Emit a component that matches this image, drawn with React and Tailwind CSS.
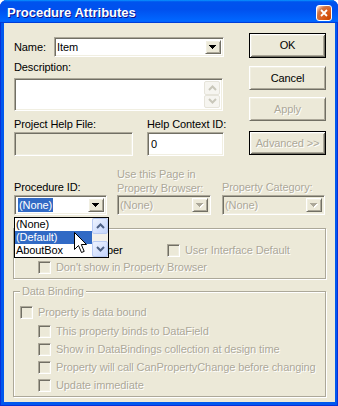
import React from 'react';

const sunken =
    'border border-t-[#aca899] border-l-[#aca899] border-b-white border-r-white shadow-[inset_1px_1px_0_#716f64,inset_-1px_-1px_0_#f1efe2]';
const raised =
    'border border-t-white border-l-white border-b-[#716f64] border-r-[#716f64] shadow-[inset_1px_1px_0_#f1efe2,inset_-1px_-1px_0_#aca899]';
const framed =
    'border border-black shadow-[inset_1px_1px_0_#fff,inset_-1px_-1px_0_#716f64,inset_2px_2px_0_#f1efe2,inset_-2px_-2px_0_#aca899]';
const grayText = 'text-[#aca899] [text-shadow:1px_1px_0_#fff]';

const Triangle = ({ disabled }) => (
    <svg width="8" height="5" viewBox="0 0 8 5" shapeRendering="crispEdges">
        {disabled && (
            <g fill="#fff">
                <rect x="1" y="1" width="7" height="1" />
                <rect x="2" y="2" width="5" height="1" />
                <rect x="3" y="3" width="3" height="1" />
                <rect x="4" y="4" width="1" height="1" />
            </g>
        )}
        <g fill={disabled ? '#aca899' : '#000'}>
            <rect x="0" y="0" width="7" height="1" />
            <rect x="1" y="1" width="5" height="1" />
            <rect x="2" y="2" width="3" height="1" />
            <rect x="3" y="3" width="1" height="1" />
        </g>
    </svg>
);

const Combo = ({ width, value, disabled, selected }) => (
    <div
        className={`${width} h-[20px] flex items-stretch p-[2px] ${sunken} ${disabled ? 'bg-[#ece9d8]' : 'bg-white'}`}
    >
        <div className={`flex-1 flex items-center ${selected ? 'pl-[1px]' : 'pl-[0px]'}`}>
            {selected ? (
                <span className="h-[14px] leading-[14px] px-[1px] bg-[#316ac5] text-white">{value}</span>
            ) : (
                <span className={disabled ? grayText : ''}>{value}</span>
            )}
        </div>
        <div className={`w-[16px] flex items-center justify-center bg-[#ece9d8] ${raised}`}>
            <Triangle disabled={disabled} />
        </div>
    </div>
);

const Button = ({ children, disabled, dark, className = '' }) => (
    <div
        className={`w-[77px] h-[24px] flex items-center justify-center bg-[#ece9d8] ${dark ? framed : raised} ${disabled ? grayText : ''} ${className}`}
    >
        {children}
    </div>
);

const Check = ({ enabled }) => (
    <div className={`w-[13px] h-[13px] shrink-0 ${sunken} ${enabled ? 'bg-white' : 'bg-[#ece9d8]'}`} />
);

const CheckRow = ({ label, enabled, className = '' }) => (
    <div className={`flex items-center h-[13px] ${className}`}>
        <Check enabled={enabled} />
        <span className={`ml-[5px] whitespace-nowrap ${enabled ? '' : grayText}`}>{label}</span>
    </div>
);

const Chevron = ({ up, color, width = 2 }) => (
    <svg width="9" height="6" viewBox="0 0 9 6">
        <path
            d={up ? 'M1 5 L4.5 1.5 L8 5' : 'M1 1 L4.5 4.5 L8 1'}
            fill="none"
            stroke={color}
            strokeWidth={width}
        />
    </svg>
);

const DropList = () => (
    <div className="absolute left-0 top-[22px] z-10 w-[95px] h-[41px] border border-black bg-white flex">
        <div className="flex-1 flex flex-col">
            <div className="h-[13px] pl-[1px]">(None)</div>
            <div className="h-[13px] pl-[1px] bg-[#316ac5] text-white">(Default)</div>
            <div className="h-[13px] pl-[1px]">AboutBox</div>
        </div>
        <div className="w-[16px] flex flex-col bg-[#f3f1ea]">
            <div className="h-[16px] flex items-center justify-center rounded-[2px] border border-[#b9cbf3] bg-[linear-gradient(135deg,#eef3fe,#c4d5fc)]">
                <Chevron up color="#4d6185" />
            </div>
            <div className="flex-1" />
            <div className="h-[16px] flex items-center justify-center rounded-[2px] border border-[#b9cbf3] bg-[linear-gradient(135deg,#eef3fe,#c4d5fc)]">
                <Chevron color="#4d6185" />
            </div>
        </div>
    </div>
);

const Cursor = () => (
    <svg className="absolute left-[70px] top-[209px] z-20" width="14" height="22" viewBox="0 0 14 22">
        <path
            d="M0.5 0.5 V17.5 L4.5 13.5 L7.5 20.5 L10.2 19.4 L7.3 12.5 H12.5 Z"
            fill="#fff"
            stroke="#000"
            strokeLinejoin="miter"
        />
    </svg>
);

const App = () => {
    return (
        <div className="w-[338px] h-[406px] bg-white font-['Liberation_Sans',Arial,sans-serif] text-[11px] leading-[13px] tracking-[-0.1px] text-black">
            <div className="w-[338px] h-[406px] flex flex-col rounded-t-[7px] overflow-hidden bg-[#0058ee] shadow-[inset_1px_0_0_#0831d9,inset_-1px_0_0_#0831d9,inset_0_-1px_0_#0831d9]">
                {/* Title bar */}
                <div className="h-[23px] shrink-0 flex items-center pl-[7px] pr-[6px] bg-[linear-gradient(180deg,#0997ff,#0053ee_8%,#0050ee_40%,#0066ff_88%,#0066ff_93%,#005bff_95%,#003dd7_96%,#003dd7)]">
                    <span className="pt-[1px] text-[13px] leading-[13px] tracking-normal font-bold text-white [text-shadow:1px_1px_0_#0f1089]">
                        Procedure Attributes
                    </span>
                    <div className="ml-auto w-[16px] h-[16px] mt-[2px] flex items-center justify-center rounded-[3px] border border-white bg-[radial-gradient(circle_at_90%_90%,#cc4600_0%,#dc6527_55%,#cd7546_70%,#ffccb2_90%,#fff_100%)]">
                        <svg width="8" height="8" viewBox="0 0 8 8">
                            <path d="M1 1 L7 7 M7 1 L1 7" stroke="#fff" strokeWidth="1.8" />
                        </svg>
                    </div>
                </div>

                {/* Body */}
                <div className="flex-1 flex pl-[4px] pr-[3px] pb-[4px]">
                    <div className="relative flex-1 flex flex-col bg-[#ece9d8] pt-[10px] pl-[10px]">
                        <div className="flex">
                            <div className="w-[235px] flex flex-col">
                                <div className="mt-[4px] flex items-center h-[20px]">
                                    <span className="w-[40px]">Name:</span>
                                    <Combo width="w-[170px]" value="Item" />
                                </div>
                                <div className="mt-[4px]">Description:</div>
                                <div className={`mt-[4px] w-[209px] h-[33px] bg-white flex justify-end p-[2px] ${sunken}`}>
                                    <div className="w-[16px] flex flex-col justify-between">
                                        <div className="h-[14px] flex items-center justify-center rounded-[2px] border border-[#e6e4da] bg-[#f6f5f0]">
                                            <Chevron up color="#c9c7ba" />
                                        </div>
                                        <div className="h-[14px] flex items-center justify-center rounded-[2px] border border-[#e6e4da] bg-[#f6f5f0]">
                                            <Chevron color="#c9c7ba" />
                                        </div>
                                    </div>
                                </div>
                                <div className="mt-[7px] flex">
                                    <span className="w-[133px]">Project Help File:</span>
                                    <span>Help Context ID:</span>
                                </div>
                                <div className="mt-[1px] flex">
                                    <div className={`w-[119px] h-[24px] bg-[#ece9d8] ${sunken}`} />
                                    <div className={`ml-[14px] w-[77px] h-[24px] bg-white pl-[3px] flex items-center ${sunken}`}>
                                        0
                                    </div>
                                </div>
                            </div>
                            <div className="flex flex-col">
                                <Button dark className="h-[25px]">OK</Button>
                                <Button className="mt-[8px]">Cancel</Button>
                                <Button disabled className="mt-[7px]">Apply</Button>
                                <Button disabled dark className="mt-[10px]">Advanced &gt;&gt;</Button>
                            </div>
                        </div>

                        <div className="mt-[11px] flex items-end">
                            <div className="w-[103px] flex flex-col">
                                <div>Procedure ID:</div>
                                <div className="mt-[1px] relative">
                                    <Combo width="w-[93px]" value="(None)" selected />
                                    <DropList />
                                </div>
                            </div>
                            <div className="w-[105px] flex flex-col">
                                <div className={`leading-[14px] ${grayText}`}>
                                    Use this Page in
                                    <br />
                                    Property Browser:
                                </div>
                                <Combo width="w-[94px]" value="(None)" disabled />
                            </div>
                            <div className="flex flex-col">
                                <div className={grayText}>Property Category:</div>
                                <div className="mt-[1px]">
                                    <Combo width="w-[103px]" value="(None)" disabled />
                                </div>
                            </div>
                        </div>

                        <div className="mt-[13px] ml-[-1px] w-[313px] h-[51px] flex flex-col pt-[15px] pl-[6px] border border-[#aca899] shadow-[1px_1px_0_#fff,inset_1px_1px_0_#fff]">
                            <div className="flex">
                                <div className="w-[147px]">
                                    <CheckRow label="Hide this member" enabled />
                                </div>
                                <CheckRow label="User Interface Default" />
                            </div>
                            <CheckRow className="mt-[4px] ml-[18px]" label="Don't show in Property Browser" />
                        </div>

                        <div className="relative mt-[12px] ml-[-1px] w-[313px] h-[106px] flex flex-col pt-[14px] pl-[6px] border border-[#aca899] shadow-[1px_1px_0_#fff,inset_1px_1px_0_#fff]">
                            <span className={`absolute left-[6px] top-[-7px] px-[2px] bg-[#ece9d8] ${grayText}`}>
                                Data Binding
                            </span>
                            <CheckRow label="Property is data bound" />
                            <CheckRow className="mt-[6px] ml-[18px]" label="This property binds to DataField" />
                            <CheckRow className="mt-[5px] ml-[18px]" label="Show in DataBindings collection at design time" />
                            <CheckRow className="mt-[5px] ml-[18px]" label="Property will call CanPropertyChange before changing" />
                            <CheckRow className="mt-[5px] ml-[18px]" label="Update immediate" />
                        </div>

                        <Cursor />
                    </div>
                </div>
            </div>
        </div>
    );
};

export default App;
